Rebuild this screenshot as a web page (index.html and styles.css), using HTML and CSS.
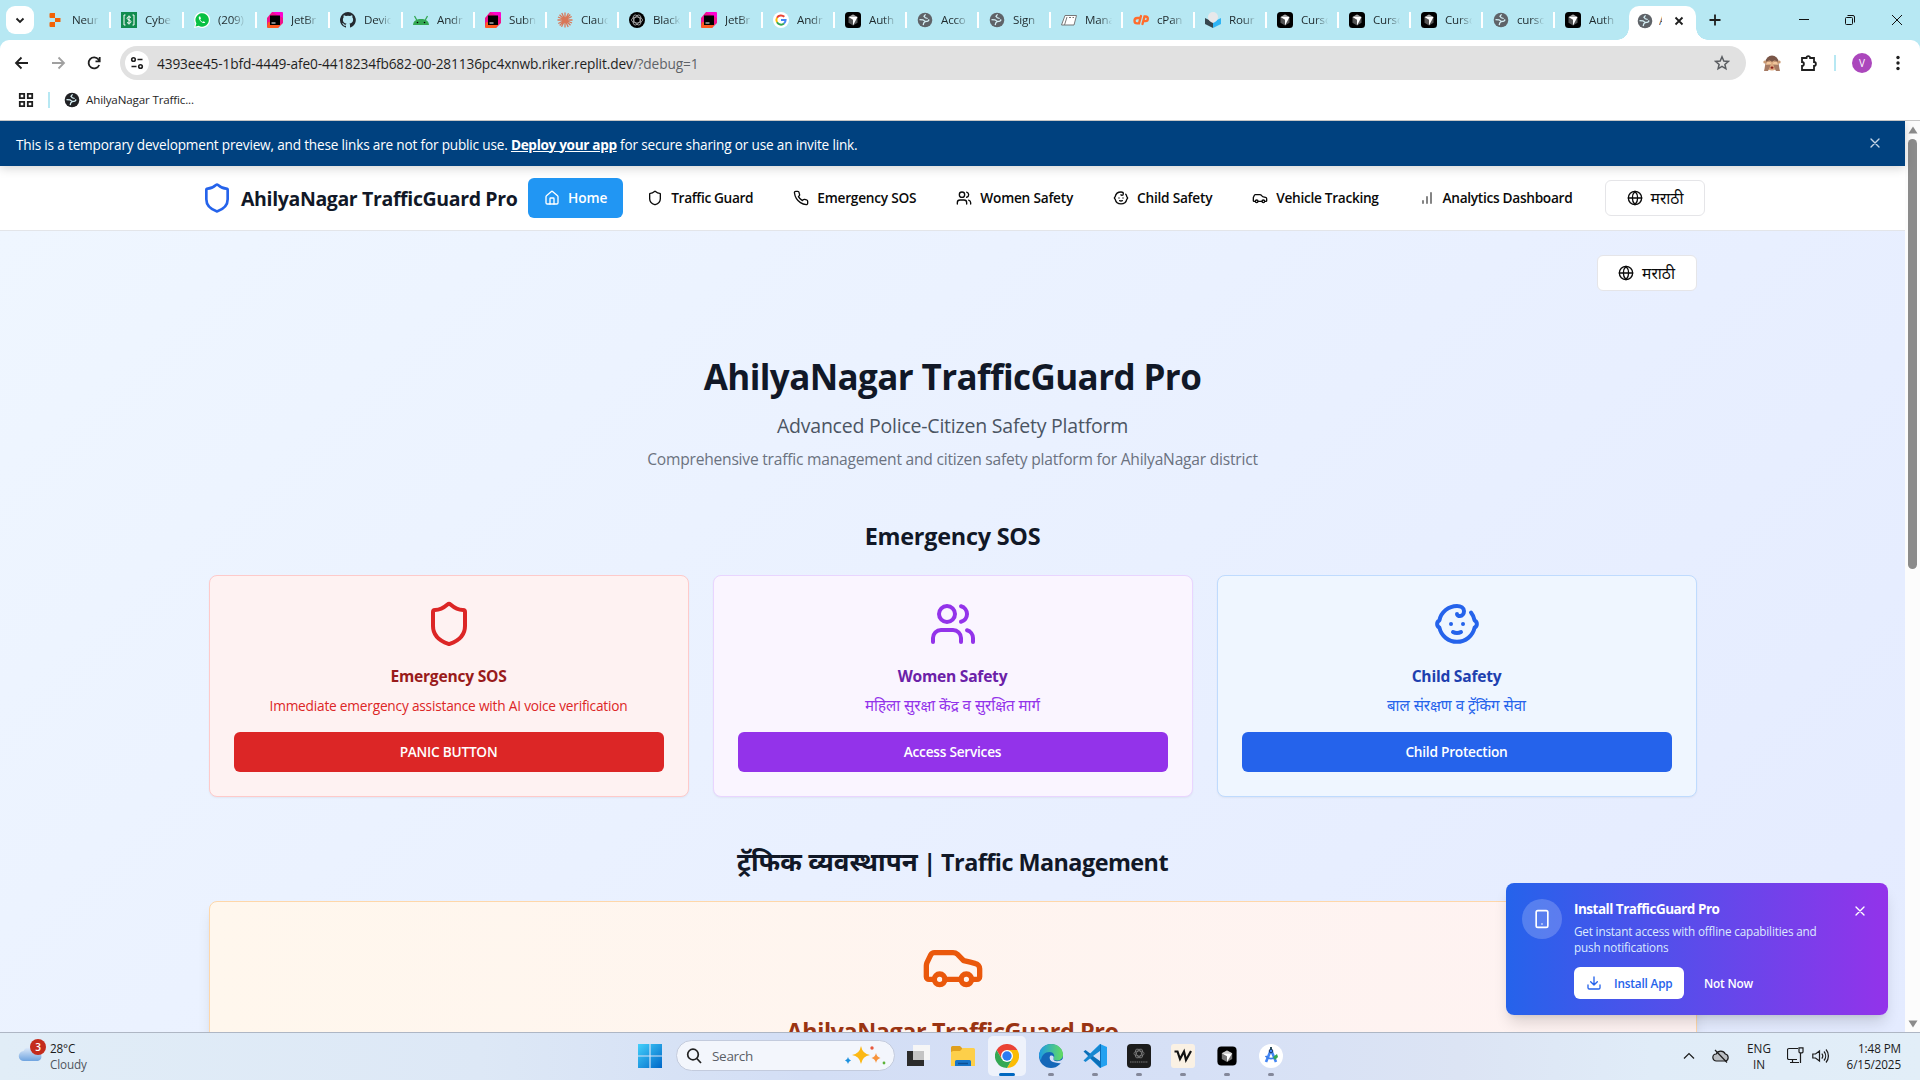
FILE: index.html
```html
<!DOCTYPE html>
<html lang="en">
<head>
<meta charset="utf-8">
<title>AhilyaNagar TrafficGuard Pro</title>
<link rel="stylesheet" href="styles.css">
</head>
<body>
<svg class="defs" aria-hidden="true">
  <symbol id="shield" viewBox="0 0 24 24"><path d="M20 13c0 5-3.500 7.500-7.660 8.950a1 1 0 0 1-.67-.01C7.500 20.500 4 18 4 13V6a1 1 0 0 1 1-1c2 0 4.500-1.200 6.240-2.720a1.170 1.170 0 0 1 1.520 0C14.510 3.810 17 5 19 5a1 1 0 0 1 1 1z"/></symbol>
  <symbol id="house" viewBox="0 0 24 24"><path d="M15 21v-8a1 1 0 0 0-1-1h-4a1 1 0 0 0-1 1v8"/><path d="M3 10a2 2 0 0 1 .709-1.528l7-5.999a2 2 0 0 1 2.582 0l7 5.999A2 2 0 0 1 21 10v9a2 2 0 0 1-2 2H5a2 2 0 0 1-2-2z"/></symbol>
  <symbol id="phone" viewBox="0 0 24 24"><path d="M22 16.920v3a2 2 0 0 1-2.180 2 19.790 19.790 0 0 1-8.630-3.070 19.500 19.500 0 0 1-6-6 19.790 19.790 0 0 1-3.070-8.670A2 2 0 0 1 4.110 2h3a2 2 0 0 1 2 1.720 12.840 12.840 0 0 0 .7 2.810 2 2 0 0 1-.45 2.110L8.090 9.910a16 16 0 0 0 6 6l1.270-1.270a2 2 0 0 1 2.110-.45 12.840 12.840 0 0 0 2.810.7A2 2 0 0 1 22 16.920z"/></symbol>
  <symbol id="users" viewBox="0 0 24 24"><path d="M16 21v-2a4 4 0 0 0-4-4H6a4 4 0 0 0-4 4v2"/><circle cx="9" cy="7" r="4"/><path d="M22 21v-2a4 4 0 0 0-3-3.870"/><path d="M16 3.130a4 4 0 0 1 0 7.750"/></symbol>
  <symbol id="baby" viewBox="0 0 24 24"><path d="M9 12h.01M15 12h.01M10 16c.5.3 1.200.5 2 .5s1.500-.2 2-.5"/><path d="M19 6.300a9 9 0 0 1 1.800 3.900 2 2 0 0 1 0 3.600 9 9 0 0 1-17.600 0 2 2 0 0 1 0-3.600A9 9 0 0 1 12 3c2 0 3.500 1.100 3.500 2.500s-.9 2.500-2 2.500c-.8 0-1.500-.4-1.500-1"/></symbol>
  <symbol id="car" viewBox="0 0 24 24"><path d="M19 17h2c.6 0 1-.4 1-1v-3c0-.9-.7-1.700-1.500-1.900C18.700 10.600 16 10 16 10s-1.300-1.400-2.200-2.300c-.5-.4-1.100-.7-1.800-.7H5c-.6 0-1.100.4-1.400.9l-1.400 2.900A3.700 3.700 0 0 0 2 12v4c0 .6.4 1 1 1h2"/><circle cx="7" cy="17" r="2"/><path d="M9 17h6"/><circle cx="17" cy="17" r="2"/></symbol>
  <symbol id="bars" viewBox="0 0 24 24"><path d="M12 20V10M18 20V4M6 20v-4"/></symbol>
  <symbol id="globe" viewBox="0 0 24 24"><circle cx="12" cy="12" r="10"/><path d="M12 2a14.500 14.500 0 0 0 0 20 14.500 14.500 0 0 0 0-20M2 12h20"/></symbol>
  <symbol id="x" viewBox="0 0 24 24"><path d="M18 6 6 18M6 6l12 12"/></symbol>
  <symbol id="f-world" viewBox="0 0 16 16"><circle cx="8" cy="8" r="7.300" fill="currentColor"/><path d="M8.600 2.300 7 4.200l1.300 1.600 2.400.7M2.500 7.600l3.500.2 2.300 1.700-1.500 1.300-.6 2.300M8.300 9.500l2.600-.3 1.300-1.700" fill="none" stroke="#d5eff5" stroke-width="1.300"/></symbol>
  <symbol id="f-jb" viewBox="0 0 16 16"><path d="M5 0h10l1 1v10l-5 5H1l-1-1V6z" fill="#f0128c"/><path d="M1 10l-1 5 1 1h10l3-4z" fill="#ff5a1f"/><path d="M5 0h10l1 1v5z" fill="#ff00d0"/><path d="M3 3.500h10V13H3z"/><path d="M4.500 11h4" stroke="#fff"/></symbol>
  <symbol id="f-cursor" viewBox="0 0 16 16"><rect width="16" height="16" rx="3.500"/><path d="M8 2.500l4.500 2.600v5.600L8 13.500l-4.500-2.800V5.100z" fill="#555"/><path d="M3.500 5.100h9L8 13.500V7.700z" fill="#fff"/><path d="M8 2.500l4.500 2.600h-9z" fill="#aaa"/></symbol>
  <symbol id="f-android" viewBox="0 0 16 16"><path d="M0 13c.3-3.500 2.500-6 8-6s7.700 2.500 8 6z" fill="#34a853"/><path d="M1.500 4l2.500 4.500M14.500 4 12 8.500" stroke="#34a853" stroke-width="1.300"/><circle cx="4.500" cy="10.500" r=".8"/><circle cx="11.500" cy="10.500" r=".8"/></symbol>
</svg>

<header class="browser">
  <div class="tabstrip">
    <button class="tab-search"><svg class="ln" width="14" height="14" viewBox="0 0 14 14"><path d="M3.500 5.500 7 9l3.500-3.500"/></svg></button>
    <div class="tabs">
      <div class="tab"><svg viewBox="0 0 16 16"><path fill="#f26207" d="M2.500 1h4.500v5H2.500a1 1 0 0 1-1-1V2a1 1 0 0 1 1-1zM7 6h5.500v4H7zM2.500 10H7v5H2.500a1 1 0 0 1-1-1v-3a1 1 0 0 1 1-1z"/></svg><span>Neur</span></div>
      <div class="tab"><svg viewBox="0 0 16 16"><rect width="16" height="16" fill="#118c4f"/><path d="M4.500 3H3v10h1.500M11.500 3H13v10h-1.500M10 5.500C9 4.500 6 4.500 6 6.300S10 7.800 10 9.700 7 11.500 6 10.500M8 3.500v9" fill="none" stroke="#fff"/></svg><span>Cybe</span></div>
      <div class="tab"><svg viewBox="0 0 16 16"><path d="M0 16l1.200-4.200A8 8 0 1 1 4.500 15z" fill="#fff"/><path d="M1.500 14.500l.9-3.100A6.700 6.700 0 1 1 4.700 13.700z" fill="#08c143"/><path d="M5 4.500c-.8 1.500.5 4 2 5.200s3.300 2 4.300.7L9.700 9.200l-1 .8C7.500 9.500 6.500 8.500 6.200 7.500L7 6.500 6.200 4.600z" fill="#fff"/></svg><span>(209)</span></div>
      <div class="tab"><svg><use href="#f-jb"/></svg><span>JetBr</span></div>
      <div class="tab"><svg viewBox="0 0 16 16"><path fill="#24292f" d="M8 0a8 8 0 0 0-2.500 15.600c.4.100.5-.2.5-.4v-1.500c-2.200.5-2.700-1-2.700-1-.4-.9-.9-1.200-.9-1.200-.7-.5.100-.5.100-.5.8.100 1.200.8 1.200.8.700 1.300 1.900.9 2.300.7.100-.5.300-.9.500-1.100-1.800-.2-3.600-.9-3.600-4 0-.9.300-1.600.8-2.100-.100-.2-.4-1 .100-2.100 0 0 .7-.2 2.200.8a7.500 7.500 0 0 1 4 0c1.500-1 2.200-.8 2.200-.8.4 1.100.200 1.900.100 2.100.5.600.8 1.300.8 2.100 0 3.100-1.900 3.800-3.700 4 .3.200.6.7.6 1.500v2.200c0 .2.100.5.6.4A8 8 0 0 0 8 0z"/></svg><span>Devic</span></div>
      <div class="tab"><svg><use href="#f-android"/></svg><span>Andr</span></div>
      <div class="tab"><svg><use href="#f-jb"/></svg><span>Subn</span></div>
      <div class="tab"><svg viewBox="0 0 16 16"><path stroke="#d97757" stroke-width="1.300" d="M8 .5v15M.5 8h15M2.500 2.700l11 10.600M13.300 2.500 2.700 13.500M4.800 1l6.400 14M11.500 1.200 4.500 14.800M1 5l14 6M1.300 11.500l13.400-7"/></svg><span>Clauc</span></div>
      <div class="tab"><svg viewBox="0 0 16 16"><circle cx="8" cy="8" r="8"/><g fill="none" stroke="#ccc" stroke-width=".7"><ellipse cx="8" cy="8" rx="5.500" ry="3"/><ellipse cx="8" cy="8" rx="5.500" ry="3" transform="rotate(60 8 8)"/><ellipse cx="8" cy="8" rx="5.500" ry="3" transform="rotate(120 8 8)"/></g></svg><span>Black</span></div>
      <div class="tab"><svg><use href="#f-jb"/></svg><span>JetBr</span></div>
      <div class="tab"><svg viewBox="0 0 16 16"><circle cx="8" cy="8" r="8" fill="#fff"/><g fill="none" stroke-width="2"><path stroke="#ea4335" d="M4 5.700A4.600 4.600 0 0 1 11.300 4.800"/><path stroke="#fbbc05" d="M4 5.700a4.600 4.600 0 0 0 0 4.600"/><path stroke="#34a853" d="M4 10.300a4.600 4.600 0 0 0 7 1.200"/><path stroke="#4285f4" d="M11 11.500A4.600 4.600 0 0 0 12.600 8H8"/></g></svg><span>Andr</span></div>
      <div class="tab"><svg><use href="#f-cursor"/></svg><span>Auth</span></div>
      <div class="tab grey"><svg><use href="#f-world"/></svg><span>Acco</span></div>
      <div class="tab grey"><svg><use href="#f-world"/></svg><span>Sign</span></div>
      <div class="tab"><svg viewBox="0 0 16 16"><path d="M.5 13 4 3.500h11.500L13 13z" fill="#fff" stroke="#777"/><path d="M3.500 13 6 5M8 5.500h2M11.500 5.500H13" stroke="#777"/></svg><span>Mana</span></div>
      <div class="tab"><svg viewBox="0 0 16 16"><path fill="none" stroke="#ff6c2c" stroke-width="2.300" stroke-linecap="round" d="M6.500 6H4.200a2.700 2.700 0 0 0 0 5.400H6L8 4M9.500 12l2-7.500h1a2.300 2.300 0 0 1 0 4.700H11"/></svg><span>cPan</span></div>
      <div class="tab"><svg viewBox="0 0 16 16"><path d="M0 6l8 4v6l-8-4z" fill="#37474f"/><path d="M16 6l-8 4v6l8-4z" fill="#2fb4f5"/><path d="M3 5a5 5 0 0 1 10 0c0 3-2 5-5 6C5 10 3 8 3 5z" fill="#e8e8ea"/></svg><span>Rour</span></div>
      <div class="tab"><svg><use href="#f-cursor"/></svg><span>Curso</span></div>
      <div class="tab"><svg><use href="#f-cursor"/></svg><span>Curso</span></div>
      <div class="tab"><svg><use href="#f-cursor"/></svg><span>Curso</span></div>
      <div class="tab grey"><svg><use href="#f-world"/></svg><span>curso</span></div>
      <div class="tab last"><svg><use href="#f-cursor"/></svg><span>Auth</span></div>
    </div>
    <div class="tab-active grey"><svg width="16" height="16"><use href="#f-world"/></svg><span>A</span><svg class="ln close" width="10" height="10" viewBox="0 0 10 10"><path d="M1.500 1.500l7 7M8.500 1.500l-7 7"/></svg></div>
    <svg class="ln plus" width="14" height="14" viewBox="0 0 14 14"><path d="M7 1.500v11M1.500 7h11"/></svg>
    <div class="winctl">
      <svg width="10" height="10" viewBox="0 0 10 10"><path d="M0 4.500h10"/></svg>
      <svg width="10" height="10" viewBox="0 0 10 10"><rect x=".5" y="2.500" width="7" height="7" rx="1"/><path d="M2.500.5H8A1.500 1.500 0 0 1 9.500 2v5.500"/></svg>
      <svg width="12" height="12" viewBox="0 0 12 12"><path d="M1 1l10 10M11 1 1 11"/></svg>
    </div>
  </div>

  <div class="toolbar">
    <svg class="ln" width="16" height="16" viewBox="0 0 16 16"><path d="M14 8H2.500M7.500 2.500 2 8l5.500 5.500"/></svg>
    <svg class="ln dim" width="16" height="16" viewBox="0 0 16 16"><path d="M2 8h11.500M8.500 2.500 14 8l-5.500 5.500"/></svg>
    <svg class="ln" width="16" height="16" viewBox="0 0 16 16"><path d="M13.200 10A5.500 5.500 0 1 1 12.500 4.500L13.500 6M13.700 2v4.300H9.500"/></svg>
    <div class="omnibox">
      <span class="site-info"><svg class="ln" width="16" height="16" viewBox="0 0 16 16"><circle cx="4.500" cy="4.500" r="1.800"/><path d="M8.500 4.500h5M2.500 11.500h5"/><circle cx="11.500" cy="11.500" r="1.800"/></svg></span>
      <span class="url">4393ee45-1bfd-4449-afe0-4418234fb682-00-281136pc4xnwb.riker.replit.dev<span class="path">/?debug=1</span></span>
      <svg class="star" width="16" height="16" viewBox="0 0 16 16"><path d="M8 1.800l1.800 4.200 4.500.4-3.400 3 1 4.400L8 11.400l-3.900 2.400 1-4.400-3.400-3L6.200 6z"/></svg>
    </div>
    <svg class="monkey" width="18" height="18" viewBox="0 0 18 18"><circle cx="9" cy="8" r="6.500" fill="#7a5648"/><circle cx="1.800" cy="8" r="1.500" fill="#c99a73"/><circle cx="16.200" cy="8" r="1.500" fill="#c99a73"/><path d="M3 8c2.500-2 4.500-2 6 0 1.500-2 3.500-2 6 0v4c-1 3-3.500 4.500-6 4.500S4 15 3 12z" fill="#dcaa80"/><path d="M1 17c1-3.500.8-6 2-9 1.700-1.200 3.500-1 5.200.2-.8 3.500-1.700 6-3.200 8.800zM17 17c-1-3.500-.8-6-2-9-1.700-1.200-3.500-1-5.200.2.8 3.500 1.700 6 3.200 8.800z" fill="#a67a63"/><path d="M3.500 8.300c1.600-1 3.200-.8 4.800.2l-.5 2-4.800.3zM14.500 8.300c-1.600-1-3.200-.8-4.800.2l.5 2 4.800.3z" fill="#f2c79c"/><ellipse cx="9" cy="13.700" rx="1.500" ry="1.100" fill="#8c1d18"/></svg>
    <svg class="ln puzzle" width="18" height="18" viewBox="0 0 18 18"><path d="M2 4h4.500a1.800 1.800 0 0 1 3.600 0H14v4a1.900 1.900 0 0 1 0 3.800V16H2v-4.200a1.900 1.900 0 0 0 0-3.800z"/></svg>
    <i class="vsep"></i>
    <span class="avatar">V</span>
    <svg class="kebab" width="4" height="16" viewBox="0 0 4 16"><circle cx="2" cy="2.500" r="1.700"/><circle cx="2" cy="8" r="1.700"/><circle cx="2" cy="13.500" r="1.700"/></svg>
  </div>

  <div class="bookmarks">
    <svg class="ln" width="16" height="16" viewBox="0 0 16 16"><path d="M1.800 1.800h4.400v4.400H1.800zM9.800 1.800h4.400v4.400H9.800zM1.800 9.800h4.400v4.400H1.800zM9.800 9.800h4.400v4.400H9.800z"/></svg>
    <i class="vsep"></i>
    <svg class="bm" width="16" height="16"><use href="#f-world"/></svg>
    <span>AhilyaNagar Traffic...</span>
  </div>
</header>

<div class="viewport">
  <div class="page">
    <div class="banner">
      <p>This is a temporary development preview, and these links are not for public use. <a>Deploy your app</a> for secure sharing or use an invite link.</p>
      <svg class="ic" width="16" height="16"><use href="#x"/></svg>
    </div>

    <nav class="nav">
      <svg class="ic brand-ic" width="32" height="32"><use href="#shield"/></svg>
      <span class="brand">AhilyaNagar TrafficGuard Pro</span>
      <div class="links">
        <a class="on"><svg class="ic"><use href="#house"/></svg>Home</a>
        <a class="tight"><svg class="ic"><use href="#shield"/></svg>Traffic Guard</a>
        <a class="snug"><svg class="ic"><use href="#phone"/></svg>Emergency SOS</a>
        <a class="snug"><svg class="ic"><use href="#users"/></svg>Women Safety</a>
        <a class="snug"><svg class="ic"><use href="#baby"/></svg>Child Safety</a>
        <a><svg class="ic"><use href="#car"/></svg>Vehicle Tracking</a>
        <a><svg class="ic thin"><use href="#bars"/></svg>Analytics Dashboard</a>
      </div>
      <button class="lang"><svg class="ic"><use href="#globe"/></svg>मराठी</button>
    </nav>

    <main class="main">
      <div class="wrap">
        <div class="top"><button class="lang"><svg class="ic"><use href="#globe"/></svg>मराठी</button></div>
        <h1>AhilyaNagar TrafficGuard Pro</h1>
        <p class="sub">Advanced Police-Citizen Safety Platform</p>
        <p class="desc">Comprehensive traffic management and citizen safety platform for AhilyaNagar district</p>

        <h2 class="sos">Emergency SOS</h2>
        <div class="cards">
          <article class="card red">
            <svg class="ic"><use href="#shield"/></svg>
            <h3>Emergency SOS</h3>
            <p>Immediate emergency assistance with AI voice verification</p>
            <button>PANIC BUTTON</button>
          </article>
          <article class="card purple">
            <svg class="ic"><use href="#users"/></svg>
            <h3>Women Safety</h3>
            <p class="deva">महिला सुरक्षा केंद्र व सुरक्षित मार्ग</p>
            <button>Access Services</button>
          </article>
          <article class="card blue">
            <svg class="ic"><use href="#baby"/></svg>
            <h3>Child Safety</h3>
            <p class="deva">बाल संरक्षण व ट्रॅकिंग सेवा</p>
            <button>Child Protection</button>
          </article>
        </div>

        <h2 class="mgmt"><span class="deva-h">ट्रॅफिक व्यवस्थापन</span> | Traffic Management</h2>
        <section class="traffic">
          <svg class="ic"><use href="#car"/></svg>
          <h2>AhilyaNagar TrafficGuard Pro</h2>
        </section>
      </div>
    </main>
  </div>

  <div class="scroll">
    <svg width="10" height="8" viewBox="0 0 10 8"><path d="M5 .5 9.500 7.500h-9z"/></svg>
    <i class="thumb"></i>
    <svg width="10" height="8" viewBox="0 0 10 8"><path d="M5 7.500 9.500.5h-9z"/></svg>
  </div>

  <aside class="toast">
    <span class="toast-ic"><svg class="ic" width="20" height="20" viewBox="0 0 24 24"><rect x="5" y="2" width="14" height="20" rx="2"/><path d="M12 18h.01"/></svg></span>
    <div class="toast-body">
      <strong>Install TrafficGuard Pro</strong>
      <p>Get instant access with offline capabilities and push notifications</p>
      <div class="actions">
        <button class="install"><svg class="ic" width="16" height="16" viewBox="0 0 24 24"><path d="M21 15v4a2 2 0 0 1-2 2H5a2 2 0 0 1-2-2v-4M7 10l5 5 5-5M12 15V3"/></svg>Install App</button>
        <button class="later">Not Now</button>
      </div>
    </div>
    <svg class="ic toast-x" width="16" height="16"><use href="#x"/></svg>
  </aside>
</div>

<footer class="taskbar">
  <div class="weather">
    <span class="cloud"><svg width="26" height="20" viewBox="0 0 26 20"><defs><linearGradient id="cl" x2="0" y2="1"><stop stop-color="#e6effb"/><stop offset="1" stop-color="#6fa4e0"/></linearGradient></defs><path d="M6 18a5 5 0 0 1-.5-10A7.500 7.500 0 0 1 19.500 9 4.600 4.600 0 0 1 20 18z" fill="url(#cl)"/></svg><b>3</b></span>
    <span class="wtext">28°C<br><em>Cloudy</em></span>
  </div>

  <div class="dock">
    <svg class="win" width="24" height="24" viewBox="0 0 24 24"><defs><linearGradient id="w" x2="1" y2="1"><stop stop-color="#43d0fb"/><stop offset="1" stop-color="#0067c8"/></linearGradient></defs><path fill="url(#w)" d="M0 0h11.400v11.400H0zM12.600 0H24v11.400H12.600zM0 12.600h11.400V24H0zM12.600 12.600H24V24H12.600z"/></svg>
    <div class="search">
      <svg width="16" height="16" viewBox="0 0 16 16"><circle cx="7" cy="6.500" r="5.300"/><path d="M10.800 10.500 15 15"/></svg>
      <span>Search</span>
      <svg class="spark" width="42" height="20" viewBox="0 0 42 20"><path d="M16 0q1.500 8 9 9-7.500 1-9 9-1.500-8-9-9 7.500-1 9-9z" fill="#fcb814"/><path d="M31 7q.7 4 4.500 5-3.800 1-4.500 5-.7-4-4.500-5 3.800-1 4.500-5z" fill="#f7933c"/><path d="M3 11q.5 3 3 3.500-2.500.5-3 3.500-.5-3-3-3.500 2.500-.5 3-3.500z" fill="#1c91df"/><circle cx="27" cy="2" r="1.700" fill="#e8583d"/><circle cx="39" cy="17" r="1.400" fill="#5cb338"/></svg>
    </div>
    <div class="apps">
      <span><svg viewBox="0 0 24 24"><path fill="#2b2b2b" d="M0 7h17v15H0z"/><path fill="#f6f6f6" d="M6 1h17v15H6z"/><path fill="#c4c4c4" d="M6 7h11v9H6z"/></svg></span>
      <span><svg viewBox="0 0 24 24"><path fill="#e0a01e" d="M0 3.500A1.500 1.500 0 0 1 1.500 2H9l3 3v6H0z"/><path fill="#fdcf4a" d="M0 8l2-1h7l3-3h10.500A1.500 1.500 0 0 1 24 5.500V22H0z"/><path fill="#1775c9" d="M4 22v-4.500A1.500 1.500 0 0 1 5.500 16h13a1.500 1.500 0 0 1 1.500 1.500V22z"/><path d="M7 19.500h10" stroke="#0b4f94" stroke-width="1.500"/></svg></span>
      <span class="cur"><svg viewBox="0 0 24 24"><path fill="#ea4335" d="M12 6h10.400A12 12 0 0 0 1.600 6L6.800 15z"/><path fill="#fbbc05" d="M12 6h10.400A12 12 0 0 1 12 24l5.200-9z"/><path fill="#34a853" d="M17.200 15 12 24A12 12 0 0 1 1.600 6l5.200 9z"/><circle cx="12" cy="12" r="6" fill="#fff"/><circle cx="12" cy="12" r="4.700" fill="#2b7bf3"/></svg></span>
      <span class="run"><svg viewBox="0 0 24 24"><defs><linearGradient id="e" x2="1"><stop stop-color="#1d9be6"/><stop offset="1" stop-color="#64dd5d"/></linearGradient></defs><circle cx="12" cy="12" r="12" fill="#1467b8"/><path fill="url(#e)" d="M0 11C1 4 6 0 12 0c7 0 12 5 12 10.500 0 4-3 6-6 6-2.500 0-4-1-3.500-2 2-3 0-6.500-4-6.500C6 8 2.500 11 2 16.500A11 11 0 0 1 0 11z"/><path fill="#d3def5" d="M14.500 14.500c-.5 1.500 1 2.700 3.500 2.700 2 0 4-.6 6-2.200v2c-1 1-1 1.500-1.500 2C20 19.500 17 19 14 18s-4-3.500-3-6c2-1 4.500 0 3.500 2.500z"/></svg></span>
      <span class="run"><svg viewBox="0 0 24 24"><path d="M17 0 24 3v18l-7 3L4.500 12z" fill="#23a1f0"/><path d="M17 0v24l1-.4V.4zM.5 7.500 2.500 6 17 17v6.500z" fill="#0b6fb8"/><path d="M.5 16.500 2.500 18 17 7V.5z" fill="#1787d0"/><path d="M17 7v10l-7-5z" fill="#d3def5"/></svg></span>
      <span class="run"><svg viewBox="0 0 24 24"><rect width="24" height="24" rx="4" fill="#1c1c1c"/><g fill="none" stroke="#8d8d8d" stroke-width=".7"><ellipse cx="12" cy="9.500" rx="5" ry="2.500"/><ellipse cx="12" cy="9.500" rx="5" ry="2.500" transform="rotate(60 12 9.500)"/><ellipse cx="12" cy="9.500" rx="5" ry="2.500" transform="rotate(120 12 9.500)"/></g><path d="M3 18h18" stroke="#5a5a5a" stroke-width="1.500" stroke-dasharray="1.500 .7"/></svg></span>
      <span class="run"><svg viewBox="0 0 24 24"><rect width="24" height="24" rx="3" fill="#faf1e4"/><path d="M3.500 7.500h3L9 15l4-7.500L15 16l5-9" fill="none" stroke="#111" stroke-width="2.200"/></svg></span>
      <span class="run"><svg viewBox="-3 -3 30 30"><rect width="24" height="24" rx="5"/><path d="M12 5l6.500 3.600v7.200L12 19.500l-6.500-3.700V8.600z" fill="#777"/><path d="M5.500 8.600h13L12 19.500v-7.300z" fill="#fff"/><path d="M12 5l6.500 3.600h-13z" fill="#ccc"/></svg></span>
      <span class="run"><svg viewBox="0 0 24 24"><circle cx="12" cy="12" r="12" fill="#fff"/><path d="M11.500 7 7 18M12.500 7 17 18" stroke="#4285f4" stroke-width="2.600"/><path d="M6.500 12c3 3.500 8 3.500 11 0" fill="none" stroke="#3b7de8" stroke-width="1.700"/><path d="M14 13l4-3 1 3-3 3z" fill="#34a853"/><circle cx="12" cy="7" r="1.800" fill="#4285f4" stroke="#1b3a6b"/><path d="M12 3v2.500" stroke="#073042" stroke-width="1.700"/></svg></span>
    </div>
  </div>

  <div class="tray">
    <svg class="chev" width="12" height="8" viewBox="0 0 12 8"><path d="M1 6.500 6 1.500l5 5"/></svg>
    <svg class="sync" width="18" height="14" viewBox="0 0 18 14"><path d="M4.500 12a3.500 3.500 0 0 1-.3-7A5 5 0 0 1 13.300 5 3.600 3.600 0 0 1 13.500 12z" fill="#b9bdc2"/><path d="M3 1l12 12.500"/></svg>
    <span class="lng">ENG<br>IN</span>
    <svg class="mon" width="17" height="17" viewBox="0 0 17 17"><path d="M11 1.500H2A1.500 1.500 0 0 0 .5 3v8A1.500 1.500 0 0 0 2 12.500h8M5.500 12.500v3M3 15.500h9M13.500 6v10M12 .8h4v4a1 1 0 0 1-1 1h-2a1 1 0 0 1-1-1z"/></svg>
    <svg class="vol" width="17" height="16" viewBox="0 0 17 16"><path d="M.8 6v4h2.700L7.500 13V3L3.500 6zM9.800 5.500a4 4 0 0 1 0 5M12 3.500a7 7 0 0 1 0 9M14 1.500a10 10 0 0 1 0 13"/></svg>
    <span class="clock">1:48 PM<br>6/15/2025</span>
  </div>
</footer>
</body>
</html>
```
FILE: styles.css
```css
* { box-sizing: border-box; margin: 0; }
html, body { height: 100%; overflow: hidden; }
body { display: flex; flex-direction: column; font-family: "Open Sans", "Noto Sans", sans-serif; color: #111827; background: #fff; }
button { font: inherit; color: inherit; border: 0; background: none; padding: 0; letter-spacing: inherit; }
svg { display: block; flex: none; }
.defs { position: absolute; width: 0; height: 0; }
.ic { fill: none; stroke: currentColor; stroke-width: 2; stroke-linecap: round; stroke-linejoin: round; }
.ln { fill: none; stroke: #1f1f1f; stroke-width: 1.800; }

/* browser chrome */
.browser { flex: none; height: 121px; background: #b7e8f3; border-bottom: 1px solid #c6c6c6; display: flex; flex-direction: column; }
.tabstrip { height: 40px; display: flex; align-items: center; padding-left: 6px; }
.tab-search { width: 28px; height: 28px; border-radius: 9px; background: #fff; display: grid; place-items: center; margin-right: 4px; }
.tabs { display: flex; width: 1589px; }
.tab { flex: 0 0 72px; height: 16px; display: flex; align-items: center; gap: 8px; padding-left: 10px; border-right: 2px solid #fff; }
.tab:nth-child(-n+5) { flex-basis: 73px; }
.tab.last { border-color: transparent; }
.tab svg { width: 16px; height: 16px; }
.tab span { font-size: 11.600px; letter-spacing: -.2px; line-height: 16px; width: 28px; white-space: nowrap; color: #1f2a2d; mask-image: linear-gradient(90deg, #000 50%, transparent 98%); }
.grey svg { color: #5f6368; }
.tab-active { position: relative; width: 67px; height: 34px; align-self: flex-end; margin-left: 2px; background: #fff; border-radius: 10px 10px 0 0; display: flex; align-items: center; padding: 0 12px 5px 8px; }
.tab-active::before, .tab-active::after { content: ""; position: absolute; bottom: 0; width: 12px; height: 12px; }
.tab-active::before { left: -12px; background: radial-gradient(circle at 0 0, transparent 11.500px, #fff 12px); }
.tab-active::after { right: -12px; background: radial-gradient(circle at 100% 0, transparent 11.500px, #fff 12px); }
.tab-active span { width: 3px; overflow: hidden; font-size: 12px; margin: 0 auto 0 6px; color: #555; }
.plus { margin-left: 12px; }
.winctl { margin-left: auto; padding-right: 17px; display: flex; align-items: center; gap: 36px; }
.winctl svg { fill: none; stroke: #111; }
.toolbar { height: 46px; background: #fff; border-radius: 9px 9px 0 0; display: flex; align-items: center; padding-left: 14px; }
.toolbar > .ln + .ln { margin-left: 20px; }
.dim { stroke: #a0a0a0; }
.omnibox { width: 1626px; height: 34px; margin-left: 18px; border-radius: 17px; background: #e1e1e1; display: flex; align-items: center; padding: 0 16px 0 5px; }
.site-info { width: 24px; height: 24px; border-radius: 50%; background: #fff; display: grid; place-items: center; margin-right: 8px; }
.site-info svg { stroke-width: 1.600; }
.url { font-size: 13.700px; letter-spacing: -.13px; color: #1f1f1f; white-space: nowrap; }
.path { color: #5f6368; }
.star { margin-left: auto; fill: none; stroke: #5a5d61; stroke-width: 1.500; }
.monkey { margin-left: 17px; }
.toolbar > .puzzle { margin-left: 19px; }
.vsep { width: 2px; height: 16px; background: #b7e8f3; }
.toolbar .vsep { margin-left: 16px; }
.avatar { width: 20px; height: 20px; border-radius: 50%; background: #ab47bc; color: #fff; font-size: 10px; line-height: 20px; text-align: center; margin-left: 16px; }
.kebab { margin-left: 24px; fill: #1f1f1f; }
.bookmarks { height: 34px; background: #fff; display: flex; align-items: center; padding: 0 0 6px 18px; font-size: 11.600px; letter-spacing: -.15px; color: #1f1f1f; }
.bookmarks .vsep { margin: 0 15px 0 14px; }
.bookmarks .bm { color: #202124; margin: 0 6px 0 -1px; }
.bookmarks span { padding-bottom: 2px; }

/* page */
.viewport { position: relative; flex: 1; min-height: 0; display: flex; overflow: hidden; }
.page { flex: 1; min-width: 0; display: flex; flex-direction: column; }
.banner { flex: none; height: 45px; background: #00417f; color: #fff; display: flex; align-items: center; justify-content: space-between; padding: 1px 22px 0 16px; font-size: 13.600px; font-weight: 500; letter-spacing: -.18px; position: relative; box-shadow: 0 2px 10px rgba(0,0,0,.18); z-index: 1; white-space: nowrap; }
.banner a { font-weight: 700; letter-spacing: -.33px; text-decoration: underline; }
.banner svg { color: #c5d5e6; margin-top: -3px; }
.nav { flex: none; height: 65px; background: #fff; border-bottom: 1px solid #e3e5e9; display: flex; align-items: center; padding-left: 201px; white-space: nowrap; }
.brand-ic { color: #2563eb; }
.brand { margin-left: 8px; width: 287px; font-size: 19.500px; font-weight: 700; letter-spacing: -.36px; }
.links { display: flex; gap: 8px; font-size: 13.700px; font-weight: 600; letter-spacing: -.31px; color: #0a0a0a; }
.links a { height: 40px; display: flex; align-items: center; gap: 8px; padding: 0 16px 2px; border-radius: 6px; }
.links svg { margin-top: 2px; }
.links svg, .lang svg { width: 16px; height: 16px; }
.links .thin { opacity: .75; }
.links .on { background: #2196f3; color: #fff; letter-spacing: -.1px; }
.links .tight { letter-spacing: -.35px; }
.links .snug { letter-spacing: -.24px; }
.lang { width: 100px; height: 36px; border: 1px solid #e5e5e8; border-radius: 6px; background: #fff; color: #0a0a0a; display: flex; align-items: center; justify-content: center; gap: 8px; font-size: 15.600px; }
.nav .lang { margin-left: auto; margin-right: 200px; }
.main { flex: none; height: 1740px; padding: 24px 0; background: linear-gradient(to bottom right, #eff6ff, #e0e7ff); }
.wrap { width: 1488px; margin: 0 auto; text-align: center; }
.top { display: flex; justify-content: flex-end; }
h1 { margin-top: 66px; font-size: 35px; line-height: 40px; font-weight: 700; letter-spacing: -.6px; }
.sub { margin-top: 15px; font-size: 19.500px; line-height: 28px; letter-spacing: -.22px; color: #4b5563; }
.desc { margin-top: 7px; font-size: 15.600px; line-height: 24px; letter-spacing: -.22px; color: #6b7280; }
h2 { margin-top: 49px; font-size: 23.400px; line-height: 32px; font-weight: 700; letter-spacing: -.42px; }
.sos { letter-spacing: -.24px; }
.mgmt { letter-spacing: -.54px; }
.deva-h { font-family: "Noto Sans", sans-serif; font-size: 26px; letter-spacing: 0; line-height: 1; }
.cards { margin-top: 23px; display: grid; grid-template-columns: repeat(3, 1fr); gap: 24px; }
.card { height: 222px; padding: 24px; border: 1px solid; border-radius: 8px; box-shadow: 0 1px 2px rgba(0,0,0,.05); display: flex; flex-direction: column; align-items: center; }
.card svg { width: 48px; height: 48px; }
.card h3 { margin-top: 16px; font-size: 15.600px; line-height: 24px; font-weight: 700; letter-spacing: -.24px; }
.card p { margin-top: 8px; font-size: 13.700px; line-height: 20px; letter-spacing: -.21px; }
.card p.deva { font-size: 15.100px; line-height: 18px; margin-bottom: 2px; letter-spacing: 0; }
.card button { margin-top: 16px; width: 100%; height: 40px; padding-bottom: 2px; border-radius: 6px; color: #fff; font-size: 13.700px; font-weight: 600; letter-spacing: -.25px; }
.red { background: #fef2f2; border-color: #fecaca; color: #dc2626; }
.red h3 { color: #991b1b; } .red button { background: #dc2626; }
.purple { background: #faf5ff; border-color: #e9d5ff; color: #9333ea; }
.purple h3 { color: #6b21a8; } .purple button { background: #9333ea; }
.blue { background: #eff6ff; border-color: #bfdbfe; color: #2563eb; }
.blue h3 { color: #1e40af; } .blue button { background: #2563eb; }
.traffic { margin-top: 23px; height: 420px; padding: 32px; border: 1px solid #fed7aa; border-radius: 8px; background: linear-gradient(to right, #fff7ed, #fef2f2); box-shadow: 0 10px 15px -3px rgba(0,0,0,.1), 0 4px 6px -4px rgba(0,0,0,.1); display: flex; flex-direction: column; align-items: center; color: #ea580c; }
.traffic svg { width: 64px; height: 64px; }
.traffic h2 { margin-top: 17px; color: #9a3412; }

.scroll { width: 15px; background: #fcfcfc; display: flex; flex-direction: column; align-items: center; padding: 5px 0 4px; fill: #8b8b8b; }
.thumb { width: 9px; height: 430px; border-radius: 5px; background: #8b8b8b; margin: 5px 0 auto; }

/* install prompt, floats above the page */
.toast { position: absolute; right: 32px; bottom: 17px; width: 382px; height: 132px; border-radius: 8px; background: linear-gradient(to right, #2563eb, #9333ea); color: #fff; padding: 16px; display: flex; gap: 12px; box-shadow: 0 10px 15px -3px rgba(0,0,0,.14), 0 4px 6px -4px rgba(0,0,0,.1); }
.toast-ic { width: 40px; height: 40px; border-radius: 50%; background: rgba(255,255,255,.2); display: grid; place-items: center; flex: none; }
.toast-body { width: 250px; }
.toast strong { display: block; font-size: 13.500px; font-weight: 700; line-height: 20px; letter-spacing: -.5px; }
.toast p { margin-top: 4px; font-size: 11.700px; line-height: 16px; letter-spacing: -.16px; color: #dbeafe; }
.actions { display: flex; margin-top: 12px; font-size: 11.800px; font-weight: 600; letter-spacing: -.18px; }
.install { width: 110px; height: 32px; border-radius: 6px; background: #fff; color: #2563eb; display: flex; align-items: center; padding-left: 12px; gap: 12px; }
.later { margin-left: 20px; }
.toast-x { margin: 4px 0 0 auto; transform: translateX(-4px); }

/* taskbar */
.taskbar { flex: none; height: 48px; padding-bottom: 2px; border-top: 1px solid #aeb6c4; background: linear-gradient(90deg, #e1edf7 0, #dde8f6 25%, #d3def5 42%, #d6e0f6 62%, #dce4f4 76%, #e0ecf8 86%, #e2eef8); display: flex; align-items: center; color: #1b1b1b; font-size: 11.700px; line-height: 16px; letter-spacing: -.15px; }
.weather { width: 638px; display: flex; align-items: center; padding-left: 18px; gap: 6px; }
.cloud { position: relative; width: 26px; height: 26px; }
.cloud b { position: absolute; left: 12px; top: -4px; width: 16px; height: 16px; border-radius: 50%; background: #c42b1c; color: #fff; font-size: 10px; text-align: center; font-weight: 600; }
.wtext em { font-style: normal; color: #50555c; }
.dock { display: flex; align-items: center; }
.search { width: 219px; height: 31px; margin-left: 14px; border: 1px solid #c3cbdd; border-radius: 16px; background: #f3f6fc; display: flex; align-items: center; padding: 0 7px 0 9px; font-size: 13.500px; letter-spacing: -.3px; color: #5a5e66; }
.search span { margin-left: 10px; }
.search svg:first-child { fill: none; stroke: #222; stroke-width: 1.700; }
.spark { margin-left: auto; }
.apps { display: flex; margin-left: 5px; gap: 6px; }
.apps span { position: relative; width: 38px; height: 40px; border-radius: 5px; display: grid; place-items: center; }
.apps svg { width: 24px; height: 24px; }
.apps .cur { background: rgba(255,255,255,.6); }
.apps .cur::after, .apps .run::after { content: ""; position: absolute; left: 50%; bottom: 0; height: 3px; border-radius: 2px; transform: translateX(-50%); width: 6px; background: #84889a; }
.apps .cur::after { width: 16px; background: #0067c0; }
.tray { display: flex; align-items: center; margin-left: auto; padding-right: 19px; }
.tray svg { fill: none; stroke: #1b1b1b; stroke-width: 1.200; }
.sync { margin-left: 17px; }
.lng { margin-left: 16px; text-align: center; letter-spacing: 0; width: 26px; }
.mon { margin-left: 15px; }
.vol { margin-left: 8px; }
.clock { margin-left: 14px; width: 58px; text-align: right; letter-spacing: -.1px; }
```
